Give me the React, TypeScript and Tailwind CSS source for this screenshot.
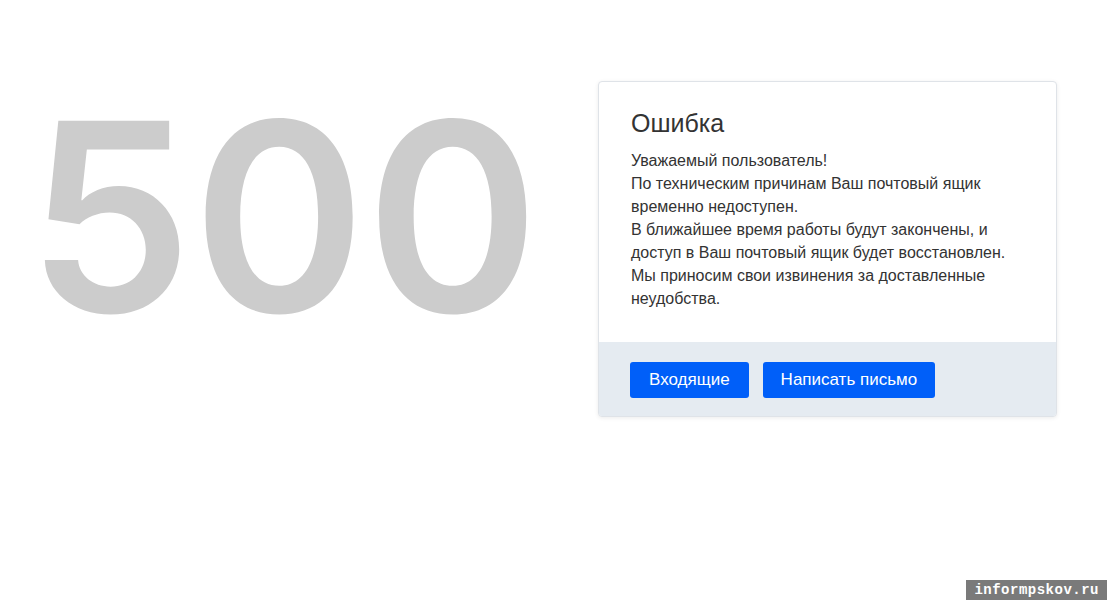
import React from "react";

const lines = [
  "Уважаемый пользователь!",
  "По техническим причинам Ваш почтовый ящик",
  "временно недоступен.",
  "В ближайшее время работы будут закончены, и",
  "доступ в Ваш почтовый ящик будет восстановлен.",
  "Мы приносим свои извинения за доставленные",
  "неудобства.",
];

export default function App() {
  return (
    <div className="relative h-[600px] w-[1107px] overflow-hidden bg-white font-['Liberation_Sans',Arial,sans-serif]">
      <div className="flex items-start pt-[81px]">
        <div className="w-[598px] shrink-0 pl-[27px] pt-[4px] font-['Inter',sans-serif] text-[263px] font-semibold leading-[1] tracking-[0px] text-[#cccccc]">
          500
        </div>
        <div className="w-[459px] overflow-hidden rounded-[4px] border border-[#dfe3e8] bg-white shadow-[0_1px_4px_rgba(0,0,0,0.08)]">
          <div className="px-[32px] pt-[25px] pb-[32px]">
            <h1 className="text-[25px] leading-[32px] text-[#333333]">Ошибка</h1>
            <p className="mt-[10px] text-[16px] leading-[23px] text-[#333333]">
              {lines.map((l, i) => (
                <React.Fragment key={i}>
                  {l}
                  {i < lines.length - 1 && <br />}
                </React.Fragment>
              ))}
            </p>
          </div>
          <div className="flex gap-[14px] bg-[#e5ebf1] px-[31px] pt-[20px] pb-[18px]">
            <button className="h-[36px] rounded-[3px] bg-[#005ff9] px-[19px] text-[17px] text-white">
              Входящие
            </button>
            <button className="h-[36px] rounded-[3px] bg-[#005ff9] px-[18px] text-[17px] text-white">
              Написать письмо
            </button>
          </div>
        </div>
      </div>
      <div className="absolute bottom-0 right-0 bg-[#7a7a7a] px-[8px] py-[1px] font-['Liberation_Mono',monospace] text-[14px] font-bold leading-[18px] tracking-[0.5px] text-white">
        informpskov.ru
      </div>
    </div>
  );
}
